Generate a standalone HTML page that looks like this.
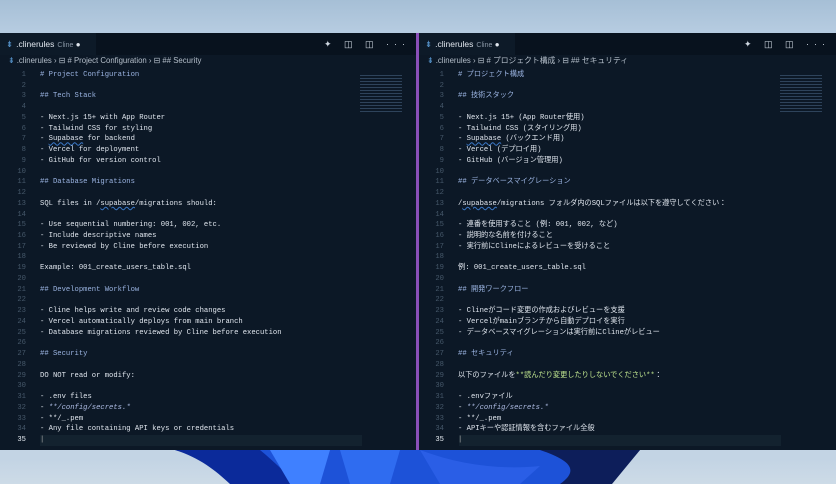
<!DOCTYPE html>
<html><head><meta charset="utf-8"><style>
body{margin:0;width:836px;height:484px;overflow:hidden;background:linear-gradient(#a6bfd6,#b5cbe0 30px,#c3d4e4 460px,#cddbe7);font-family:"Liberation Sans","Noto Sans CJK JP",sans-serif;position:relative}
.wall{position:absolute;left:0;top:450px;width:836px;height:34px}
.pane{position:absolute;top:33px;height:417px;background:#0c1826;overflow:hidden}
.tabs{height:22px;background:#08121e;position:relative}
.tab{position:absolute;left:0;top:0;height:22px;width:96px;background:#0d1a28;color:#e0e6ee;font-size:8.5px;line-height:22px;padding-left:6px;box-sizing:border-box}
.tab i{color:#5a9bd5;font-style:normal;margin-right:3px}
.tab small{color:#8a97a6;font-size:7px;margin-left:3px}
.icons{position:absolute;right:6px;top:0;line-height:22px;color:#d0d8e2;font-size:9px;letter-spacing:5px}
.bc{height:12px;color:#b4bec9;font-size:7.8px;line-height:12px;padding-left:8px;white-space:nowrap}
.code{position:absolute;top:37px;left:0;right:0;font-family:"Liberation Mono","Noto Sans CJK JP",monospace;font-size:7.2px;line-height:10.74px;color:#e0e6ee;white-space:pre}
.ln{position:absolute;left:0;width:26px;text-align:right;color:#46586a}
.tx{position:absolute;left:40px}
.h{color:#9bb4e2}
.u{text-decoration:underline wavy #3a78c8;text-underline-offset:1px;text-decoration-thickness:1px}
.it{font-style:italic;color:#b0bee6}
.g{color:#c2e890}
.cur{position:absolute;left:40px;top:402px;width:322px;height:11px;background:#13222f}
.map{position:absolute;right:14px;top:40px;width:42px;height:40px;background:repeating-linear-gradient(#0c1826 0 2px,#44607e 2px 3px);opacity:.6}
</style></head><body>
<svg class="wall" viewBox="0 0 836 34" preserveAspectRatio="none"><path d="M175 0 L640 0 L610 34 L290 34 Z" fill="#1d52d8"/><path d="M175 0 L260 0 C275 12 285 24 300 34 L230 34 C215 20 200 8 175 0Z" fill="#0b2a9a"/><path d="M270 0 L330 0 L320 34 L290 34Z" fill="#3f80ff"/><path d="M340 0 L400 0 L390 34 L350 34Z" fill="#2f6cf0"/><path d="M420 0 C460 15 500 20 540 16 L520 34 L440 34Z" fill="#2a5ee6"/><path d="M540 0 L640 0 L612 34 L560 34 C580 20 570 10 540 0Z" fill="#0d1e5a"/></svg>

<div class="pane" style="left:0;width:416px">
<div class="tabs"><div class="tab"><i>⇟</i>.clinerules<small>Cline</small> <span style="font-size:8px">●</span></div><div class="icons">✦ ◫ ◫ ···</div></div>
<div class="bc"><span style="color:#5a9bd5">⇟</span> .clinerules › ⊟ # Project Configuration › ⊟ ## Security</div>
<div class="map"></div>
<div class="cur"></div>
<div class="code"><div class="ln">1
2
3
4
5
6
7
8
9
10
11
12
13
14
15
16
17
18
19
20
21
22
23
24
25
26
27
28
29
30
31
32
33
34
<span style="color:#e6ecf2">35</span></div><div class="tx"><span class="h"># Project Configuration</span>

<span class="h">## Tech Stack</span>

- Next.js 15+ with App Router
- Tailwind CSS for styling
- <span class="u">Supabase</span> for backend
- Vercel for deployment
- GitHub for version control

<span class="h">## Database Migrations</span>

SQL files in /<span class="u">supabase</span>/migrations should:

- Use sequential numbering: 001, 002, etc.
- Include descriptive names
- Be reviewed by Cline before execution

Example: 001_create_users_table.sql

<span class="h">## Development Workflow</span>

- Cline helps write and review code changes
- Vercel automatically deploys from main branch
- Database migrations reviewed by Cline before execution

<span class="h">## Security</span>

DO NOT read or modify:

- .env files
- <span class="it">**/config/secrets.*</span>
- **/_.pem
- Any file containing API keys or credentials
<span style="color:#aaa">|</span></div></div>
</div>
<div style="position:absolute;left:416px;top:33px;width:3px;height:417px;background:#8a4fb8"></div>
<div class="pane" style="left:419px;width:417px">
<div class="tabs"><div class="tab"><i>⇟</i>.clinerules<small>Cline</small> <span style="font-size:8px">●</span></div><div class="icons">✦ ◫ ◫ ···</div></div>
<div class="bc"><span style="color:#5a9bd5">⇟</span> .clinerules › ⊟ # プロジェクト構成 › ⊟ ## セキュリティ</div>
<div class="map"></div>
<div class="cur"></div>
<div class="code" style="left:-1px"><div class="ln">1
2
3
4
5
6
7
8
9
10
11
12
13
14
15
16
17
18
19
20
21
22
23
24
25
26
27
28
29
30
31
32
33
34
<span style="color:#e6ecf2">35</span></div><div class="tx"><span class="h"># プロジェクト構成</span>

<span class="h">## 技術スタック</span>

- Next.js 15+ (App Router使用)
- Tailwind CSS (スタイリング用)
- <span class="u">Supabase</span> (バックエンド用)
- Vercel (デプロイ用)
- GitHub (バージョン管理用)

<span class="h">## データベースマイグレーション</span>

/<span class="u">supabase</span>/migrations フォルダ内のSQLファイルは以下を遵守してください：

- 連番を使用すること (例: 001, 002, など)
- 説明的な名前を付けること
- 実行前にClineによるレビューを受けること

例: 001_create_users_table.sql

<span class="h">## 開発ワークフロー</span>

- Clineがコード変更の作成およびレビューを支援
- Vercelがmainブランチから自動デプロイを実行
- データベースマイグレーションは実行前にClineがレビュー

<span class="h">## セキュリティ</span>

以下のファイルを<span class="g">**読んだり変更したりしないでください**</span>：

- .envファイル
- <span class="it">**/config/secrets.*</span>
- **/_.pem
- APIキーや認証情報を含むファイル全般
<span style="color:#aaa">|</span></div></div>
</div>
</body></html>
